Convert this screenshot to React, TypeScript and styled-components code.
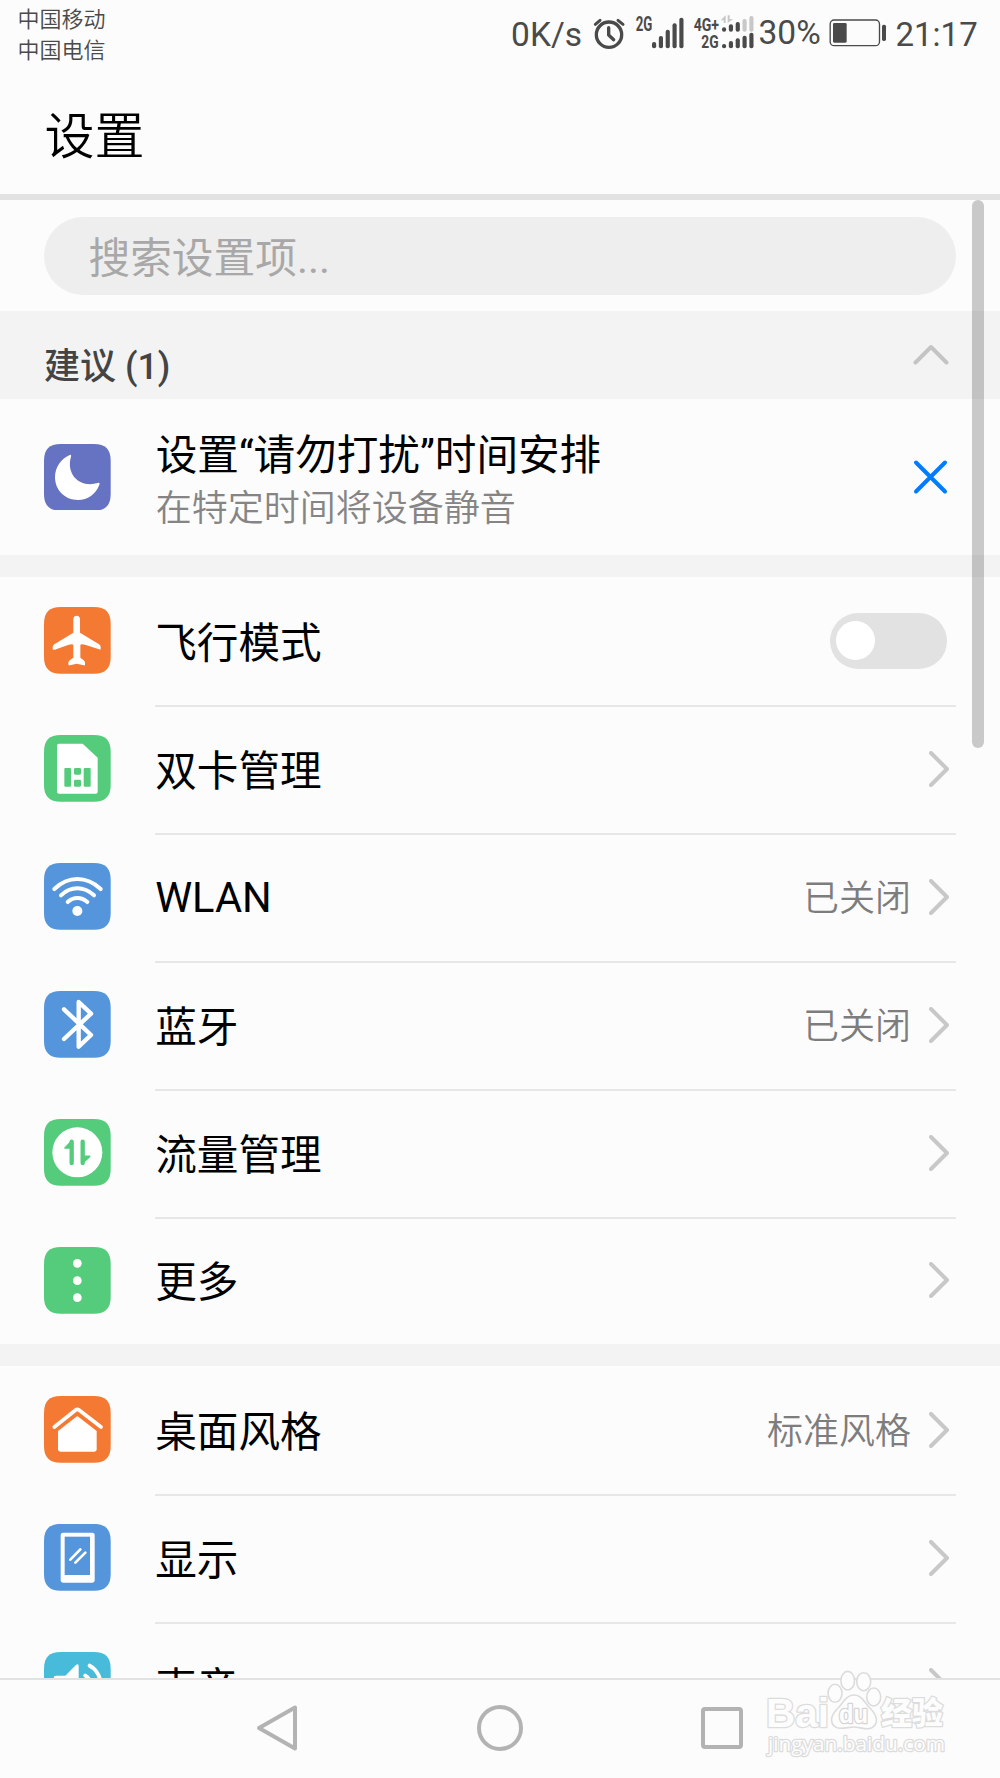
import React from 'react';
import styled, { createGlobalStyle } from 'styled-components';

const GlobalStyle = createGlobalStyle`
  * { box-sizing: border-box; }
  body { margin: 0; background: #fcfcfc; }
`;

const Screen = styled.div`
  position: relative;
  display: flex;
  flex-direction: column;
  width: 1000px;
  height: 1778px;
  overflow: hidden;
  background: #fcfcfc;
  color: #000;
  font-family: Roboto, 'Noto Sans CJK SC', sans-serif;
`;

const StatusBar = styled.header`
  display: flex;
  justify-content: space-between;
  height: 68px;
  padding: 0 22px 0 17.5px;
  color: #4a4a4a;
`;

const Carriers = styled.div`
  padding-top: 5px;
  font-size: 22px;
  font-weight: 350;
  line-height: 30.6px;
`;

const StatusItems = styled.div`
  display: flex;
  align-items: flex-start;
`;

const StatusText = styled.span<{ $top: number; $width: number; $size?: number }>`
  flex: none;
  width: ${p => p.$width}px;
  padding-top: ${p => p.$top}px;
  font-size: ${p => p.$size ?? 33.5}px;
  line-height: 40px;
  white-space: nowrap;
`;

const StatusGlyph = styled.svg<{ $gap: number }>`
  flex: none;
  height: 50px;
  margin-right: ${p => p.$gap}px;
  overflow: visible;
`;

const TitleBar = styled.div`
  display: flex;
  align-items: center;
  height: 132px;
  padding: 12px 44px 0 44.5px;
  border-bottom: 6px solid #e2e2e2;
`;

const Title = styled.h1`
  margin: 0;
  font-size: 50px;
  font-weight: 350;
  line-height: 60px;
`;

const Content = styled.main`
  position: relative;
  flex: 1;
  min-height: 0;
  overflow: hidden;
`;

const SearchArea = styled.div`
  height: 111px;
  padding: 17px 44.5px 0 44px;
`;

const SearchField = styled.div`
  display: flex;
  align-items: center;
  height: 77.5px;
  padding: 7px 44.5px 0;
  border-radius: 39px;
  background: #eeeeee;
  color: #a8a8a8;
  font-size: 41.7px;
  line-height: 50px;
`;

const SuggestionHeader = styled.div`
  display: flex;
  justify-content: space-between;
  height: 88px;
  padding: 33px 51.5px 0 44px;
  background: #f3f3f3;
  color: #444;
  font-size: 36px;
  font-weight: 500;
  line-height: 46px;
`;

const SuggestionRow = styled.div`
  display: flex;
  align-items: center;
  height: 156px;
  padding: 0 52px 0 44px;
`;

const SuggestionText = styled.div`
  flex: 1;
  margin-left: 45px;
  padding-top: 12px;
`;

const SuggestionTitle = styled.div`
  font-size: 41.6px;
  line-height: 52px;
`;

const SuggestionSummary = styled.div`
  color: #858585;
  font-size: 36px;
  font-weight: 350;
  line-height: 54px;
`;

const Gap = styled.div`
  height: 22px;
  background: #f3f3f3;
`;

const Row = styled.div<{ $height?: number }>`
  display: flex;
  height: ${p => p.$height ?? 128}px;
  padding: 0 44px;
`;

const IconTile = styled.svg`
  flex: none;
  width: 66.7px;
  height: 66.7px;
`;

const RowIcon = styled.div`
  padding-top: 30.3px;
  height: 100%;
`;

const RowBody = styled.div<{ $divided: boolean }>`
  flex: 1;
  display: flex;
  align-items: center;
  margin-left: 44.5px;
  padding: 0 7px 2.5px 0;
  border-top: 2px solid ${p => (p.$divided ? '#e7e7e7' : 'transparent')};
`;

const Label = styled.span<{ $latin?: boolean }>`
  flex: 1;
  padding-top: ${p => (p.$latin ? 2 : 5.5)}px;
  font-size: 41.6px;
  line-height: 50px;
`;

const Value = styled.span`
  margin-right: 18px;
  padding-top: 4.5px;
  color: #7d7d7d;
  font-size: 36px;
  font-weight: 350;
  line-height: 44px;
`;

const Toggle = styled.div`
  display: flex;
  align-items: center;
  width: 117px;
  height: 56px;
  margin-right: 2px;
  padding-left: 5.5px;
  border-radius: 28px;
  background: #e2e2e2;
`;

const Knob = styled.div`
  width: 39px;
  height: 39px;
  border-radius: 50%;
  background: #fff;
`;

const ScrollThumb = styled.div`
  position: absolute;
  top: 0;
  left: 972px;
  width: 11.5px;
  height: 548px;
  border-radius: 6px;
  background: rgba(0, 0, 0, 0.2);
`;

const NavBar = styled.nav`
  display: flex;
  justify-content: center;
  gap: 176px;
  height: 100px;
  padding-top: 24px;
  border-top: 2px solid #e2e2e2;
`;

const Watermark = styled.svg`
  position: absolute;
  left: 760px;
  top: 1665px;
`;

const colors = {
  indigo: '#6672c2',
  orange: '#f47a33',
  green: '#54cc7c',
  blue: '#5595db',
  cyan: '#48bbda',
};

const Tile = ({ color, children }: { color: string; children: React.ReactNode }) => (
  <IconTile viewBox="0 0 200 200">
    <path
      d="M50 0H150C184 0 200 16 200 50V150C200 184 184 200 150 200H50C16 200 0 184 0 150V50C0 16 16 0 50 0Z"
      fill={color}
    />
    {children}
  </IconTile>
);

const MoonIcon = () => (
  <Tile color={colors.indigo}>
    <path
      d="M77 33C81 31 82 34 81 38C65 91 108 133 161 117C166 115 168 118 166 122C155 151 131 168 102 168C62 168 33 138 33 100C33 70 50 45 77 33Z"
      fill="#fff"
    />
  </Tile>
);

const PlaneIcon = () => (
  <Tile color={colors.orange}>
    <path
      d="M88 37C88 23 108 23 108 37V77L165 112Q170 115 170 120V125Q170 129 165 127L123 113Q109 109 109 115V152L119 160Q123 163 123 168V173Q123 176 119 175L98 170L78 175Q73 176 73 172V168Q73 164 77 160L88 152V115Q88 109 74 113L32 128Q26 130 26 125V120Q26 115 31 112L88 77Z"
      fill="#fff"
    />
  </Tile>
);

const SimIcon = () => (
  <Tile color={colors.green}>
    <path
      d="M45 26H116L161 68V170Q161 176 155 176H45Q39 176 39 170V32Q39 26 45 26Z"
      fill="#fff"
    />
    <g fill={colors.green}>
      <rect x="61" y="99" width="20" height="56" rx="3" />
      <rect x="90" y="99" width="21" height="20" rx="4" />
      <rect x="90" y="134" width="21" height="21" rx="4" />
      <rect x="119" y="99" width="21" height="56" rx="3" />
    </g>
  </Tile>
);

const WifiIcon = () => (
  <Tile color={colors.blue}>
    <g fill="none" stroke="#fff" strokeWidth="12" strokeLinecap="round">
      <path d="M31 78Q62 48 100 48T170 78" />
      <path d="M51 97Q73 76 100 76T150 97" />
      <path d="M71 117Q84 105 100 105T130 117" />
    </g>
    <circle cx="100" cy="144" r="15" fill="#fff" />
  </Tile>
);

const BluetoothIcon = () => (
  <Tile color={colors.blue}>
    <path
      d="M60 55L141 132L104 167V33L141 68L60 144"
      fill="none"
      stroke="#fff"
      strokeWidth="13"
      strokeLinecap="round"
      strokeLinejoin="round"
    />
  </Tile>
);

const DataIcon = () => (
  <Tile color={colors.green}>
    <circle cx="100" cy="100" r="75" fill="#fff" />
    <g fill={colors.green} stroke={colors.green} strokeLinejoin="round" strokeLinecap="round">
      <path d="M83 68V132M116 68V132" strokeWidth="13" fill="none" />
      <path d="M83 66L63 87H84Z" strokeWidth="5" />
      <path d="M116 132L137 112H116Z" strokeWidth="5" />
    </g>
  </Tile>
);

const MoreIcon = () => (
  <Tile color={colors.green}>
    <g fill="#fff">
      <circle cx="100" cy="49" r="13" />
      <circle cx="100" cy="101" r="13" />
      <circle cx="100" cy="152" r="13" />
    </g>
  </Tile>
);

const HomeIcon = () => (
  <Tile color={colors.orange}>
    <path
      d="M31 93L95 42Q100 38 105 42L171 93"
      fill="none"
      stroke="#fff"
      strokeWidth="11"
      strokeLinecap="round"
    />
    <path d="M100 60L158 105V160Q158 167 151 167H49Q42 167 42 160V105Z" fill="#fff" />
  </Tile>
);

const DisplayIcon = () => (
  <Tile color={colors.blue}>
    <rect x="50" y="26" width="102" height="150" rx="7" fill="#fff" />
    <rect x="62" y="38" width="76" height="115" fill={colors.blue} />
    <path d="M79 107L109 76M94 116L124 86" stroke="#fff" strokeWidth="8" strokeLinecap="round" />
  </Tile>
);

const SoundIcon = () => (
  <Tile color={colors.cyan}>
    <path
      d="M36 71H64L95 40Q104 32 104 43V158Q104 169 95 161L64 130H36Q29 130 29 123V78Q29 71 36 71Z"
      fill="#fff"
    />
    <g fill="none" stroke="#fff" strokeWidth="12" strokeLinecap="round">
      <path d="M137 41C181 65 181 137 137 161" />
      <path d="M124 71C145 85 145 117 124 131" />
    </g>
  </Tile>
);

const Chevron = () => (
  <svg width="20" height="36" viewBox="0 0 20 36" fill="none" stroke="#c8c8c8" strokeWidth="4" strokeLinecap="round" strokeLinejoin="round">
    <path d="M2 2L18 18L2 34" />
  </svg>
);

const ChevronUp = () => (
  <svg width="36" height="22" viewBox="0 0 36 22" fill="none" stroke="#c4c4c4" strokeWidth="4" strokeLinecap="round" strokeLinejoin="round">
    <path d="M2.5 18.5L18 3L33.5 18.5" />
  </svg>
);

const CloseIcon = () => (
  <svg width="35" height="36" viewBox="0 0 35 36" stroke="#007dff" strokeWidth="4" strokeLinecap="round">
    <path d="M3 3.5L32 32.5M32 3.5L3 32.5" />
  </svg>
);

const AlarmIcon = () => (
  <StatusGlyph $gap={9.3} viewBox="278 0 98 150" width={32.7} fill="none" stroke="#4a4a4a" strokeLinecap="round">
    <circle cx="326" cy="104" r="38" strokeWidth="10" />
    <path d="M325 83V105L340 119" strokeWidth="10" strokeLinejoin="round" />
    <path d="M285 73L299 61M353 61L368 73" strokeWidth="9" />
  </StatusGlyph>
);

const bars = (x: number, bottom: number, tops: number[], fills?: string[], step = 20.5) =>
  tops.map((top, i) => (
    <rect key={i} x={x + i * step} y={top} width={12.5} height={bottom - top} rx={6} fill={fills ? fills[i] : '#4a4a4a'} />
  ));

const SignalIcon = () => (
  <StatusGlyph $gap={8} viewBox="404 0 150 150" width={50}>
    <text x="406" y="94" fontFamily="Roboto" fontWeight="700" fontSize="58" fill="#4a4a4a" textLength="50" lengthAdjust="spacingAndGlyphs">2G</text>
    {bars(455, 145, [126, 108, 89, 70, 53])}
  </StatusGlyph>
);

const DualSignalIcon = () => (
  <StatusGlyph $gap={3.1} viewBox="578 0 188 150" width={62.7}>
    <g fontFamily="Roboto" fontWeight="700" fontSize="57" fill="#4a4a4a">
      <text x="580" y="94" textLength="76" lengthAdjust="spacingAndGlyphs">4G+</text>
      <text x="603" y="144" textLength="52" lengthAdjust="spacingAndGlyphs">2G</text>
    </g>
    <path d="M676 46V69H670V61H661ZM682 46V69L698 57H688V46Z" fill="#c8c8c8" />
    {bars(665, 95, [82, 73, 66, 57, 48], ['#4a4a4a', '#4a4a4a', '#4a4a4a', '#c8c8c8', '#c8c8c8'])}
    {bars(665, 145, [132, 123, 115, 107, 98])}
  </StatusGlyph>
);

const BatteryIcon = () => (
  <StatusGlyph $gap={8.8} viewBox="986 0 174 150" width={58}>
    <rect x="989.5" y="60" width="148" height="77" rx="12" fill="none" stroke="#4a4a4a" strokeWidth="4" />
    <rect x="998" y="69" width="41" height="59" rx="4" fill="#4a4a4a" />
    <rect x="1145" y="74" width="12" height="49" rx="5" fill="#4a4a4a" />
  </StatusGlyph>
);

const BaiduWatermark = () => (
  <Watermark width="190" height="100" viewBox="0 0 190 100">
    <g fill="#fdfdfd" stroke="#dcdcdc" strokeWidth="1.6">
      <ellipse cx="75" cy="28.3" rx="7" ry="9" />
      <ellipse cx="87.7" cy="15.7" rx="6.8" ry="9.3" />
      <ellipse cx="103.7" cy="16.7" rx="7" ry="9" />
      <ellipse cx="113.7" cy="32" rx="7" ry="9" />
      <path d="M94 30C101 30 104 36 109 42C115 48 119 54 115 60C110 67 101 62 94 62C87 62 78 66 73 60C69 53 74 47 79 42C84 36 87 30 94 30Z" />
      <g paintOrder="stroke" strokeWidth="2.6" strokeLinejoin="round">
        <text x="6" y="62" fontFamily="Liberation Sans" fontWeight="700" fontSize="40" textLength="63" lengthAdjust="spacingAndGlyphs">Bai</text>
        <text x="121" y="59" fontFamily="Noto Sans CJK SC" fontWeight="900" fontSize="31" textLength="62" lengthAdjust="spacingAndGlyphs">经验</text>
        <text x="79" y="58" fontFamily="Liberation Sans" fontWeight="700" fontSize="25" textLength="29" lengthAdjust="spacingAndGlyphs" stroke="#d5d5d5">du</text>
        <text x="8" y="86" fontFamily="Open Sans" fontSize="20.5" textLength="177" lengthAdjust="spacingAndGlyphs">jingyan.baidu.com</text>
      </g>
    </g>
  </Watermark>
);

interface Item {
  label: string;
  icon: React.ReactNode;
  latin?: boolean;
  value?: string;
  toggle?: boolean;
  height?: number;
}

const network: Item[] = [
  { label: '飞行模式', icon: <PlaneIcon />, toggle: true },
  { label: '双卡管理', icon: <SimIcon /> },
  { label: 'WLAN', latin: true, icon: <WifiIcon />, value: '已关闭' },
  { label: '蓝牙', icon: <BluetoothIcon />, value: '已关闭' },
  { label: '流量管理', icon: <DataIcon /> },
  { label: '更多', icon: <MoreIcon />, height: 127 },
];

const device: Item[] = [
  { label: '桌面风格', icon: <HomeIcon />, value: '标准风格' },
  { label: '显示', icon: <DisplayIcon /> },
  { label: '声音', icon: <SoundIcon /> },
];

const Group = ({ items }: { items: Item[] }) => (
  <section>
    {items.map((item, i) => (
      <Row key={item.label} $height={item.height}>
        <RowIcon>{item.icon}</RowIcon>
        <RowBody $divided={i > 0}>
          <Label $latin={item.latin}>{item.label}</Label>
          {item.value && <Value>{item.value}</Value>}
          {item.toggle ? (
            <Toggle role="switch" aria-checked={false}>
              <Knob />
            </Toggle>
          ) : (
            <Chevron />
          )}
        </RowBody>
      </Row>
    ))}
  </section>
);

export default function App() {
  return (
    <Screen>
      <GlobalStyle />
      <StatusBar>
        <Carriers>
          <div>中国移动</div>
          <div>中国电信</div>
        </Carriers>
        <StatusItems>
          <StatusText $top={14.5} $width={81.7}>0K/s</StatusText>
          <AlarmIcon />
          <SignalIcon />
          <DualSignalIcon />
          <StatusText $top={12.5} $width={70.2}>30%</StatusText>
          <BatteryIcon />
          <StatusText $top={14.5} $width={82.5} $size={33}>21:17</StatusText>
        </StatusItems>
      </StatusBar>
      <TitleBar>
        <Title>设置</Title>
      </TitleBar>
      <Content>
        <SearchArea>
          <SearchField>搜索设置项...</SearchField>
        </SearchArea>
        <SuggestionHeader>
          <span>建议 (1)</span>
          <ChevronUp />
        </SuggestionHeader>
        <SuggestionRow>
          <MoonIcon />
          <SuggestionText>
            <SuggestionTitle>设置“请勿打扰”时间安排</SuggestionTitle>
            <SuggestionSummary>在特定时间将设备静音</SuggestionSummary>
          </SuggestionText>
          <CloseIcon />
        </SuggestionRow>
        <Gap />
        <Group items={network} />
        <Gap />
        <Group items={device} />
        <ScrollThumb />
      </Content>
      <NavBar>
        <svg width="46" height="48" viewBox="0 0 46 48" fill="none" stroke="#b3b3b3" strokeWidth="4" strokeLinejoin="round">
          <path d="M41 3.5V44.5L5 24Z" />
        </svg>
        <svg width="48" height="48" viewBox="0 0 48 48" fill="none" stroke="#b3b3b3" strokeWidth="4">
          <circle cx="24" cy="24" r="21" />
        </svg>
        <svg width="46" height="48" viewBox="0 0 46 48" fill="none" stroke="#b3b3b3" strokeWidth="4">
          <rect x="3" y="5" width="38" height="38" rx="2" />
        </svg>
      </NavBar>
      <BaiduWatermark />
    </Screen>
  );
}
